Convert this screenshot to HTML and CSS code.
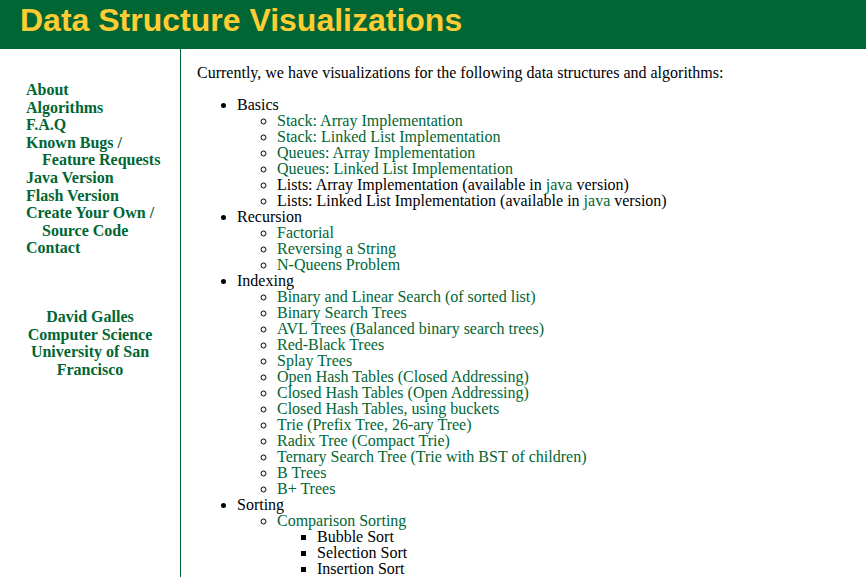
FILE: index.html
```html
<!DOCTYPE html>
<html lang="en">
<head>
<meta charset="utf-8">
<title>Data Structure Visualizations</title>
<link rel="stylesheet" href="styles.css">
</head>
<body>
<header class="header"><h1>Data Structure Visualizations</h1></header>
<div class="container">
<nav class="sidebar">
<ul class="menu">
<li><a href="#">About</a></li>
<li><a href="#">Algorithms</a></li>
<li><a href="#">F.A.Q</a></li>
<li><a href="#">Known Bugs /<br><span class="indent">Feature Requests</span></a></li>
<li><a href="#">Java Version</a></li>
<li><a href="#">Flash Version</a></li>
<li><a href="#">Create Your Own /<br><span class="indent">Source Code</span></a></li>
<li><a href="#">Contact</a></li>
</ul>
<div class="credit"><a href="#">David Galles</a><br><a href="#">Computer Science</a><br><a href="#">University of San Francisco</a></div>
</nav>
<main class="content">
<p>Currently, we have visualizations for the following data structures and algorithms:</p>
<ul>
<li>Basics
<ul>
<li><a href="#">Stack: Array Implementation</a></li>
<li><a href="#">Stack: Linked List Implementation</a></li>
<li><a href="#">Queues: Array Implementation</a></li>
<li><a href="#">Queues: Linked List Implementation</a></li>
<li>Lists: Array Implementation (available in <a href="#">java</a> version)</li>
<li>Lists: Linked List Implementation (available in <a href="#">java</a> version)</li>
</ul></li>
<li>Recursion
<ul>
<li><a href="#">Factorial</a></li>
<li><a href="#">Reversing a String</a></li>
<li><a href="#">N-Queens Problem</a></li>
</ul></li>
<li>Indexing
<ul>
<li><a href="#">Binary and Linear Search (of sorted list)</a></li>
<li><a href="#">Binary Search Trees</a></li>
<li><a href="#">AVL Trees (Balanced binary search trees)</a></li>
<li><a href="#">Red-Black Trees</a></li>
<li><a href="#">Splay Trees</a></li>
<li><a href="#">Open Hash Tables (Closed Addressing)</a></li>
<li><a href="#">Closed Hash Tables (Open Addressing)</a></li>
<li><a href="#">Closed Hash Tables, using buckets</a></li>
<li><a href="#">Trie (Prefix Tree, 26-ary Tree)</a></li>
<li><a href="#">Radix Tree (Compact Trie)</a></li>
<li><a href="#">Ternary Search Tree (Trie with BST of children)</a></li>
<li><a href="#">B Trees</a></li>
<li><a href="#">B+ Trees</a></li>
</ul></li>
<li>Sorting
<ul>
<li><a href="#">Comparison Sorting</a>
<ul>
<li>Bubble Sort</li>
<li>Selection Sort</li>
<li>Insertion Sort</li>
</ul></li>
</ul></li>
</ul>
</main>
</div>
</body>
</html>
```
FILE: styles.css
```css
body {
  margin: 0;
  display: flex;
  flex-direction: column;
  min-height: 100vh;
  background: #fff;
  color: #000;
  font: 16px/16px "Liberation Serif", serif;
}

a {
  color: #006633;
  text-decoration: none;
}

.header {
  padding: 0 20px 9px;
  background: #006633;
  color: #ffcc33;
}

.header h1 {
  margin: 0;
  font: bold 32px/40px "Liberation Sans", sans-serif;
}

.container {
  display: flex;
  flex: 1;
}

.sidebar {
  box-sizing: border-box;
  flex: none;
  width: 181px;
  padding: 32px 20px 0 26px;
  border-right: 1px solid #006633;
  font-weight: bold;
  line-height: 1.1;
}

.menu {
  margin: 0;
  padding: 0;
  list-style: none;
  white-space: nowrap;
}

.indent {
  padding-left: 16px;
}

.credit {
  margin: 51px 6px 0 0;
  text-align: center;
}

.content {
  flex: 1;
  padding: 0 16px;
}

.content p {
  margin: 16px 0;
}

.content ul {
  margin: 0;
  padding-left: 40px;
}
```
